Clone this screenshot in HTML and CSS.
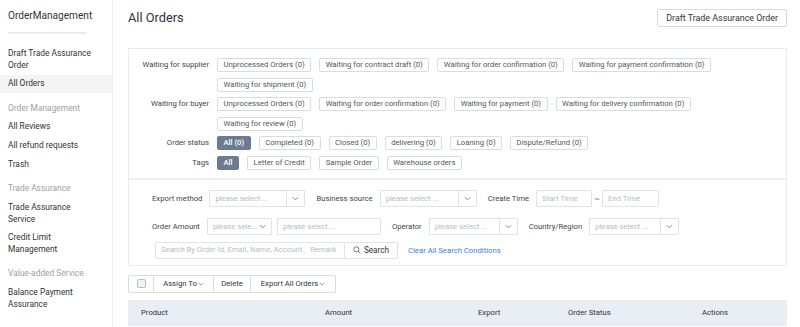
FILE: index.html
```html
<!DOCTYPE html>
<html lang="en">
<head>
<meta charset="utf-8">
<title>All Orders</title>
<link rel="stylesheet" href="styles.css">
</head>
<body>
<div class="app">
  <aside class="sidebar">
    <div class="logo">OrderManagement</div>
    <div class="logo-rule"></div>
    <nav class="nav">
      <a class="nav-item">Draft Trade Assurance<br>Order</a>
      <a class="nav-item active">All Orders</a>
      <div class="nav-head">Order Management</div>
      <a class="nav-item">All Reviews</a>
      <a class="nav-item">All refund requests</a>
      <a class="nav-item">Trash</a>
      <div class="nav-head">Trade Assurance</div>
      <a class="nav-item">Trade Assurance<br>Service</a>
      <a class="nav-item">Credit Limit<br>Management</a>
      <div class="nav-head">Value-added Service</div>
      <a class="nav-item">Balance Payment<br>Assurance</a>
    </nav>
  </aside>

  <main class="main">
    <header class="page-head">
      <h1 class="title">All Orders</h1>
      <button class="btn-outline">Draft Trade Assurance Order</button>
    </header>

    <section class="filters">
      <div class="status-part">
        <div class="group">
          <div class="group-label">Waiting for supplier</div>
          <div class="tags">
            <span class="tag">Unprocessed Orders (0)</span>
            <span class="tag">Waiting for contract draft (0)</span>
            <span class="tag">Waiting for order confirmation (0)</span>
            <span class="tag">Waiting for payment confirmation (0)</span>
            <span class="tag">Waiting for shipment (0)</span>
          </div>
        </div>
        <div class="group">
          <div class="group-label">Waiting for buyer</div>
          <div class="tags">
            <span class="tag">Unprocessed Orders (0)</span>
            <span class="tag">Waiting for order confirmation (0)</span>
            <span class="tag">Waiting for payment (0)</span>
            <span class="tag">Waiting for delivery confirmation (0)</span>
            <span class="tag">Waiting for review (0)</span>
          </div>
        </div>
        <div class="group">
          <div class="group-label">Order status</div>
          <div class="tags">
            <span class="tag on">All (0)</span>
            <span class="tag">Completed (0)</span>
            <span class="tag">Closed (0)</span>
            <span class="tag">delivering (0)</span>
            <span class="tag">Loaning (0)</span>
            <span class="tag">Dispute/Refund (0)</span>
          </div>
        </div>
        <div class="group">
          <div class="group-label">Tags</div>
          <div class="tags">
            <span class="tag on">All</span>
            <span class="tag">Letter of Credit</span>
            <span class="tag">Sample Order</span>
            <span class="tag">Warehouse orders</span>
          </div>
        </div>
      </div>

      <div class="search-part">
        <div class="frow">
          <label class="flabel">Export method</label>
          <div class="select w96"><span class="ph">please select ...</span><span class="arrow"><svg viewBox="0 0 8 5" class="chev"><path d="M1 1l3 3 3-3"/></svg></span></div>
          <label class="flabel gap-l">Business source</label>
          <div class="select w97"><span class="ph">please select ...</span><span class="arrow"><svg viewBox="0 0 8 5" class="chev"><path d="M1 1l3 3 3-3"/></svg></span></div>
          <label class="flabel gap-l">Create Time</label>
          <div class="input w56"><span class="ph">Start Time</span></div>
          <span class="tilde">~</span>
          <div class="input w57"><span class="ph">End Time</span></div>
        </div>
        <div class="frow">
          <label class="flabel">Order Amount</label>
          <div class="select w65 noline"><span class="ph">please sele...</span><span class="arrow"><svg viewBox="0 0 8 5" class="chev"><path d="M1 1l3 3 3-3"/></svg></span></div>
          <div class="input w104 ml5"><span class="ph">please select ...</span></div>
          <label class="flabel gap-l">Operator</label>
          <div class="select w89"><span class="ph">please select ...</span><span class="arrow"><svg viewBox="0 0 8 5" class="chev"><path d="M1 1l3 3 3-3"/></svg></span></div>
          <label class="flabel gap-l">Country/Region</label>
          <div class="select w90"><span class="ph">please select ...</span><span class="arrow"><svg viewBox="0 0 8 5" class="chev"><path d="M1 1l3 3 3-3"/></svg></span></div>
        </div>
        <div class="frow search-row">
          <div class="input w190"><span class="ph">Search By Order Id, Email, Name, Account、Remark</span></div>
          <button class="btn-search"><svg viewBox="0 0 10 10" class="mag"><circle cx="4.2" cy="4.2" r="3.2"/><path d="M6.6 6.6l2.6 2.6"/></svg>Search</button>
          <a class="clear-link">Clear All Search Conditions</a>
        </div>
      </div>
    </section>

    <div class="toolbar">
      <span class="tb-seg tb-check"><span class="checkbox"></span></span>
      <span class="tb-seg tb-assign">Assign To <svg viewBox="0 0 8 5" class="chev sm"><path d="M1 1l3 3 3-3"/></svg></span>
      <span class="tb-seg tb-delete">Delete</span>
      <span class="tb-seg tb-export">Export All Orders <svg viewBox="0 0 8 5" class="chev sm"><path d="M1 1l3 3 3-3"/></svg></span>
    </div>

    <div class="thead">
      <span>Product</span>
      <span>Amount</span>
      <span>Export</span>
      <span>Order Status</span>
      <span>Actions</span>
    </div>
  </main>
</div>
</body>
</html>
```

FILE: styles.css
```css
* { box-sizing: border-box; }
html, body { margin: 0; padding: 0; }
body {
  font-family: Roboto, "Liberation Sans", Arial, sans-serif;
  color: #333;
  background: #fff;
  width: 800px;
  height: 327px;
  overflow: hidden;
}
.app { display: flex; height: 327px; }

/* Sidebar */
.sidebar {
  width: 113px;
  flex: 0 0 113px;
  border-right: 1px solid #eeeeee;
}
.logo {
  font-size: 10.1px;
  color: #333;
  padding: 10px 0 0 8px;
  height: 32px;
  line-height: 12px;
}
.logo-rule {
  height: 2px;
  background: #ebebeb;
  width: 79px;
  margin-left: 8px;
}
.nav { padding-top: 10.5px; display: flex; flex-direction: column; }
.nav-item {
  display: block;
  font-size: 8.4px;
  line-height: 11.8px;
  padding: 3.4px 0 3.4px 8px;
  color: #333;
}
.nav-item.active { background: #f4f4f4; }
.nav-head {
  font-size: 8.4px;
  line-height: 11.8px;
  padding: 3.4px 0 3.4px 8px;
  margin-top: 6px;
  color: #a0a0a0;
}

/* Main */
.main {
  flex: 1;
  padding: 0 13px 0 15px;
  min-width: 0;
}
.page-head {
  display: flex;
  justify-content: space-between;
  align-items: center;
  height: 35px;
  margin-bottom: 13px;
}
.title {
  margin: 0;
  font-size: 12.8px;
  font-weight: 400;
  color: #333;
}
.btn-outline {
  font-family: inherit;
  font-size: 8.9px;
  color: #333;
  height: 18px;
  padding: 0 8px;
  background: #fff;
  border: 1px solid #d6d9de;
  border-radius: 2px;
}

/* Filters box */
.filters {
  border: 1px solid #e8ebf1;
}
.status-part {
  padding: 9px 20px 8px 0;
  border-bottom: 2px solid #eef0f4;
  display: flex;
  flex-direction: column;
  gap: 5.5px;
}
.group { display: flex; align-items: flex-start; }
.group-label {
  width: 80px;
  flex: 0 0 80px;
  text-align: right;
  font-size: 7.7px;
  line-height: 14px;
  color: #444;
}
.tags {
  margin-left: 8px;
  display: flex;
  flex-wrap: wrap;
  gap: 5.5px 8px;
}
.tag {
  height: 14px;
  line-height: 12px;
  font-size: 7.7px;
  color: #555;
  border: 1px solid #d8dce3;
  border-radius: 2px;
  padding: 0 5.5px;
  white-space: nowrap;
  background: #fff;
}
.tag.on {
  background: #6d7b91;
  border-color: #6d7b91;
  color: #fff;
  font-weight: 500;
}

.search-part {
  padding: 10px 0 6px 23px;
  display: flex;
  flex-direction: column;
  gap: 11px;
}
.search-row { margin-top: -4px; padding-left: 3px; }
.frow { display: flex; align-items: center; height: 17px; }
.flabel {
  font-size: 7.7px;
  color: #444;
  margin-right: 7px;
  white-space: nowrap;
}
.gap-l { margin-left: 11px; }
.select, .input {
  height: 17px;
  border: 1px solid #dfe2e8;
  border-radius: 1px;
  display: flex;
  align-items: center;
  background: #fff;
  overflow: hidden;
}
.ph {
  flex: 1;
  font-size: 7.7px;
  color: #b9bcc2;
  padding-left: 5px;
  white-space: nowrap;
  overflow: hidden;
}
.arrow {
  width: 18px;
  height: 100%;
  border-left: 1px solid #dfe2e8;
  display: flex;
  align-items: center;
  justify-content: center;
}
.noline .arrow { border-left: none; width: 12px; justify-content: flex-start; }
.chev {
  width: 7px;
  height: 5px;
  fill: none;
  stroke: #777;
  stroke-width: 1;
}
.chev.sm { width: 6px; height: 4px; margin-left: 1px; }
.w56 { width: 56px; }
.w57 { width: 57px; }
.w65 { width: 65px; }
.w89 { width: 89px; }
.w90 { width: 90px; }
.w96 { width: 96px; }
.w97 { width: 97px; }
.w104 { width: 104px; }
.w190 { width: 190px; border-radius: 2px 0 0 2px; }
.ml5 { margin-left: 5px; }
.tilde { font-size: 8px; color: #666; width: 10px; text-align: center; }

.btn-search {
  height: 17px;
  width: 53px;
  border: 1px solid #dfe2e8;
  border-left: none;
  background: #fff;
  font-family: inherit;
  font-size: 8.2px;
  color: #333;
  display: flex;
  align-items: center;
  justify-content: center;
  gap: 3px;
  padding: 0;
  border-radius: 0 2px 2px 0;
}
.mag { width: 8px; height: 8px; fill: none; stroke: #555; stroke-width: 1; }
.clear-link {
  margin-left: 10px;
  font-size: 7.7px;
  color: #3b7fd6;
}

/* Toolbar */
.toolbar {
  margin-top: 9px;
  display: flex;
  width: fit-content;
  height: 18px;
  border: 1px solid #d9dce2;
  border-radius: 2px;
}
.tb-seg {
  display: flex;
  align-items: center;
  justify-content: center;
  font-size: 7.7px;
  color: #333;
  border-left: 1px solid #d9dce2;
  height: 100%;
}
.tb-seg:first-child { border-left: none; }
.tb-check { width: 24px; }
.tb-assign { width: 60px; }
.tb-delete { width: 37px; }
.tb-export { width: 85px; }
.checkbox {
  width: 9px;
  height: 9px;
  border: 1px solid #b8bcc3;
  border-radius: 2px;
  background: #f1f2f4;
}

/* Table header */
.thead {
  margin-top: 7px;
  height: 26px;
  background: #e9edf4;
  display: grid;
  grid-template-columns: 184px 153px 90px 134px 1fr;
  align-items: center;
  padding-left: 13px;
  font-size: 7.7px;
  color: #333;
}
```
